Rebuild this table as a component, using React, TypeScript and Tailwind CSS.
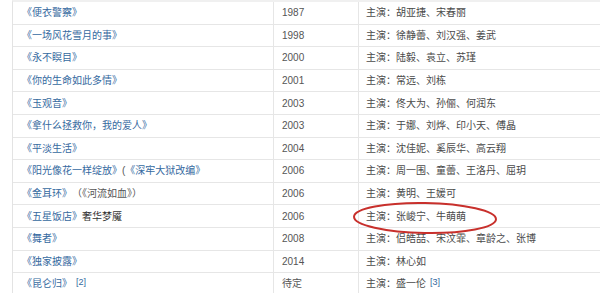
const rows: { title: React.ReactNode; year: string; cast: React.ReactNode }[] = [
  { title: <A>《便衣警察》</A>, year: "1987", cast: "主演：胡亚捷、宋春丽" },
  { title: <A>《一场风花雪月的事》</A>, year: "1998", cast: "主演：徐静蕾、刘汉强、姜武" },
  { title: <A>《永不瞑目》</A>, year: "2000", cast: "主演：陆毅、袁立、苏瑾" },
  { title: <A>《你的生命如此多情》</A>, year: "2001", cast: "主演：常远、刘栋" },
  { title: <A>《玉观音》</A>, year: "2003", cast: "主演：佟大为、孙俪、何润东" },
  { title: <A>《拿什么拯救你，我的爱人》</A>, year: "2003", cast: "主演：于娜、刘烨、印小天、傅晶" },
  { title: <A>《平淡生活》</A>, year: "2004", cast: "主演：沈佳妮、奚辰华、高云翔" },
  {
    title: (
      <>
        <A>《阳光像花一样绽放》</A>
        <span className="text-[#555]">(</span>
        <A>《深牢大狱改编》</A>
      </>
    ),
    year: "2006",
    cast: "主演：周一围、童蕾、王洛丹、屈玥",
  },
  {
    title: (
      <>
        <A>《金耳环》</A>
        <span className="text-[#555]">（《河流如血》）</span>
      </>
    ),
    year: "2006",
    cast: "主演：黄明、王媛可",
  },
  {
    title: (
      <>
        <A>《五星饭店》</A>
        <span className="text-[#333]"> 奢华梦魇</span>
      </>
    ),
    year: "2006",
    cast: "主演：张峻宁、牛萌萌",
  },
  { title: <A>《舞者》</A>, year: "2008", cast: "主演：侣皓喆、宋汶霏、章龄之、张博" },
  { title: <A>《独家披露》</A>, year: "2014", cast: "主演：林心如" },
  {
    title: (
      <>
        <A>《昆仑归》</A>
        <Ref n={2} />
      </>
    ),
    year: "待定",
    cast: (
      <>
        主演：盛一伦
        <Ref n={3} />
      </>
    ),
  },
];

function A({ children }: { children: React.ReactNode }) {
  return <span className="text-[#3569a0]">{children}</span>;
}

function Ref({ n }: { n: number }) {
  return (
    <sup className="ml-[4px] text-[9px] text-[#3569a0] relative top-[-2px]">[{n}]</sup>
  );
}

export default function App() {
  return (
    <div
      className="relative w-[600px] h-[293px] overflow-hidden bg-white text-[10px] text-[#4a4a4a]"
      style={{ fontFamily: '"Liberation Sans", "Noto Sans CJK SC", sans-serif' }}
    >
      <div className="ml-[12px] border-l border-[#e3e3e3] border-t-2 border-t-[#f0f0f0]">
        {rows.map((r, i) => (
          <div
            key={i}
            className="grid grid-cols-[260px_85px_1fr] h-[22.6px] border-b border-[#e6e6e6] items-center"
          >
            <div className="pl-[9px] h-full flex items-center whitespace-nowrap">
              {r.title}
            </div>
            <div className="pl-[8px] h-full flex items-center border-l border-[#e6e6e6] text-[#555]">
              {r.year}
            </div>
            <div className="pl-[7px] h-full flex items-center border-l border-[#e6e6e6] whitespace-nowrap">
              {r.cast}
            </div>
          </div>
        ))}
      </div>

      {/* red circle marker */}
      <svg
        className="absolute left-[352px] top-[201px]"
        width="146"
        height="34"
        viewBox="0 0 146 34"
      >
        <ellipse
          cx="73"
          cy="17"
          rx="71"
          ry="15"
          fill="none"
          stroke="#c8302c"
          strokeWidth="2"
          transform="rotate(1 73 17)"
        />
      </svg>
    </div>
  );
}
